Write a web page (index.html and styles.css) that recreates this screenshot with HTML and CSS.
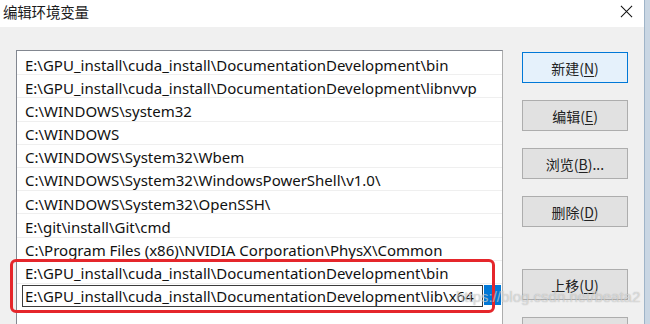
FILE: index.html
```html
<!doctype html>
<html lang="zh-CN">
    <head>
        <meta charset="UTF-8" />
        <meta name="viewport" content="width=device-width, initial-scale=1.0" />
        <title>编辑环境变量</title>
        <link rel="stylesheet" href="styles.css">
    </head>
    <body>
        <div class="window">
            <div class="titlebar">
                <span class="title">编辑环境变量</span>
                <svg class="close" viewBox="0 0 14 14">
                    <path d="M1 1 L13 13 M13 1 L1 13"></path>
                </svg>
            </div>

            <div class="content">
                <div class="list">
                    <div class="row">E:\GPU_install\cuda_install\DocumentationDevelopment\bin</div>
                    <div class="row">E:\GPU_install\cuda_install\DocumentationDevelopment\libnvvp</div>
                    <div class="row">C:\WINDOWS\system32</div>
                    <div class="row">C:\WINDOWS</div>
                    <div class="row">C:\WINDOWS\System32\Wbem</div>
                    <div class="row">C:\WINDOWS\System32\WindowsPowerShell\v1.0\</div>
                    <div class="row">C:\WINDOWS\System32\OpenSSH\</div>
                    <div class="row">E:\git\install\Git\cmd</div>
                    <div class="row">C:\Program Files (x86)\NVIDIA Corporation\PhysX\Common</div>
                    <div class="row">E:\GPU_install\cuda_install\DocumentationDevelopment\bin</div>
                    <div class="row row-edit">
                        <span class="edit-box">E:\GPU_install\cuda_install\DocumentationDevelopment\lib\x64</span>
                        <span class="selection"></span>
                    </div>
                    <div class="row"></div>
                </div>

                <div class="buttons">
                    <button class="btn btn-default">新建(<u>N</u>)</button>
                    <button class="btn">编辑(<u>E</u>)</button>
                    <button class="btn">浏览(<u>B</u>)...</button>
                    <button class="btn">删除(<u>D</u>)</button>
                    <button class="btn btn-gap">上移(<u>U</u>)</button>
                    <!-- next button is cut off by the screenshot -->
                    <button class="btn" aria-label="下移"></button>
                </div>
            </div>

            <!-- annotation + watermark over the picture -->
            <div class="highlight"></div>
            <div class="watermark">https://blog.csdn.net/beata2</div>
        </div>
    </body>
</html>
```

FILE: styles.css
```css
* {
    margin: 0;
    padding: 0;
    box-sizing: border-box;
}

body {
    font-family: "Noto Sans", "Noto Sans CJK SC", sans-serif;
    background: #ffffff;
    color: #000000;
    overflow: hidden;
}

.window {
    position: relative;
    width: 650px;
    height: 324px;
    overflow: hidden;
    display: flex;
    flex-direction: column;
    border-right: 5px solid #c9d6e3;
}

.titlebar {
    height: 27px;
    flex-shrink: 0;
    background: #ffffff;
    display: flex;
    align-items: center;
    justify-content: space-between;
    padding: 0 11px 4px 3px;
    border-right: 1px solid #9fb4c8;
}

.title {
    font-family: "Noto Sans CJK SC", sans-serif;
    font-size: 14.5px;
    color: #1a1a1a;
    letter-spacing: -0.2px;
}

.close {
    width: 13px;
    height: 13px;
    stroke: #111111;
    stroke-width: 1.1;
    fill: none;
}

.content {
    flex: 1;
    background: #f0f0f0;
    display: flex;
    align-items: flex-start;
    padding: 23px 0 0 16px;
    border-right: 1px solid #9fb4c8;
}

.list {
    width: 487px;
    height: 300px;
    background: #ffffff;
    border: 1px solid #828790;
    border-right-color: #adadad;
    padding-top: 1px;
}

.row {
    height: 23.2px;
    line-height: 20px;
    padding: 2.5px 0 0 8px;
    font-size: 15px;
    color: #111111;
    border-bottom: 1px solid #efefef;
    white-space: nowrap;
    overflow: hidden;
}

.row-edit {
    display: flex;
    align-items: flex-start;
    padding: 1px 0 0 5px;
    height: 24px;
    border-bottom: none;
}

.edit-box {
    width: 461px;
    height: 22px;
    padding: 0 0 0 2px;
    line-height: 20px;
    border: 1px solid #3c3c3c;
    background: #ffffff;
    overflow: hidden;
}

.selection {
    width: 17px;
    height: 20px;
    margin-left: 1px;
    background: #0078d7;
}

.buttons {
    display: flex;
    flex-direction: column;
    gap: 17px;
    margin: 2px 0 0 19px;
}

.btn {
    width: 106px;
    height: 31px;
    font-family: "Noto Sans CJK SC", sans-serif;
    font-size: 14px;
    color: #222222;
    background: #e1e1e1;
    border: 1px solid #adadad;
}

.btn u {
    text-decoration-thickness: 1px;
    text-underline-offset: 2px;
}

.btn-default {
    background: #e5f1fb;
    border-color: #0078d7;
}

.btn-gap {
    margin-top: 25px;
}

.highlight {
    position: absolute;
    left: 10px;
    top: 259px;
    width: 485px;
    height: 54px;
    border: 3px solid #e5262b;
    border-radius: 6px;
}

.watermark {
    position: absolute;
    left: 456px;
    top: 288px;
    font-family: "Liberation Sans", sans-serif;
    font-size: 15px;
    color: rgba(255, 255, 255, 0.5);
    text-shadow: 0 0 1px rgba(90, 90, 90, 0.5);
}
```
